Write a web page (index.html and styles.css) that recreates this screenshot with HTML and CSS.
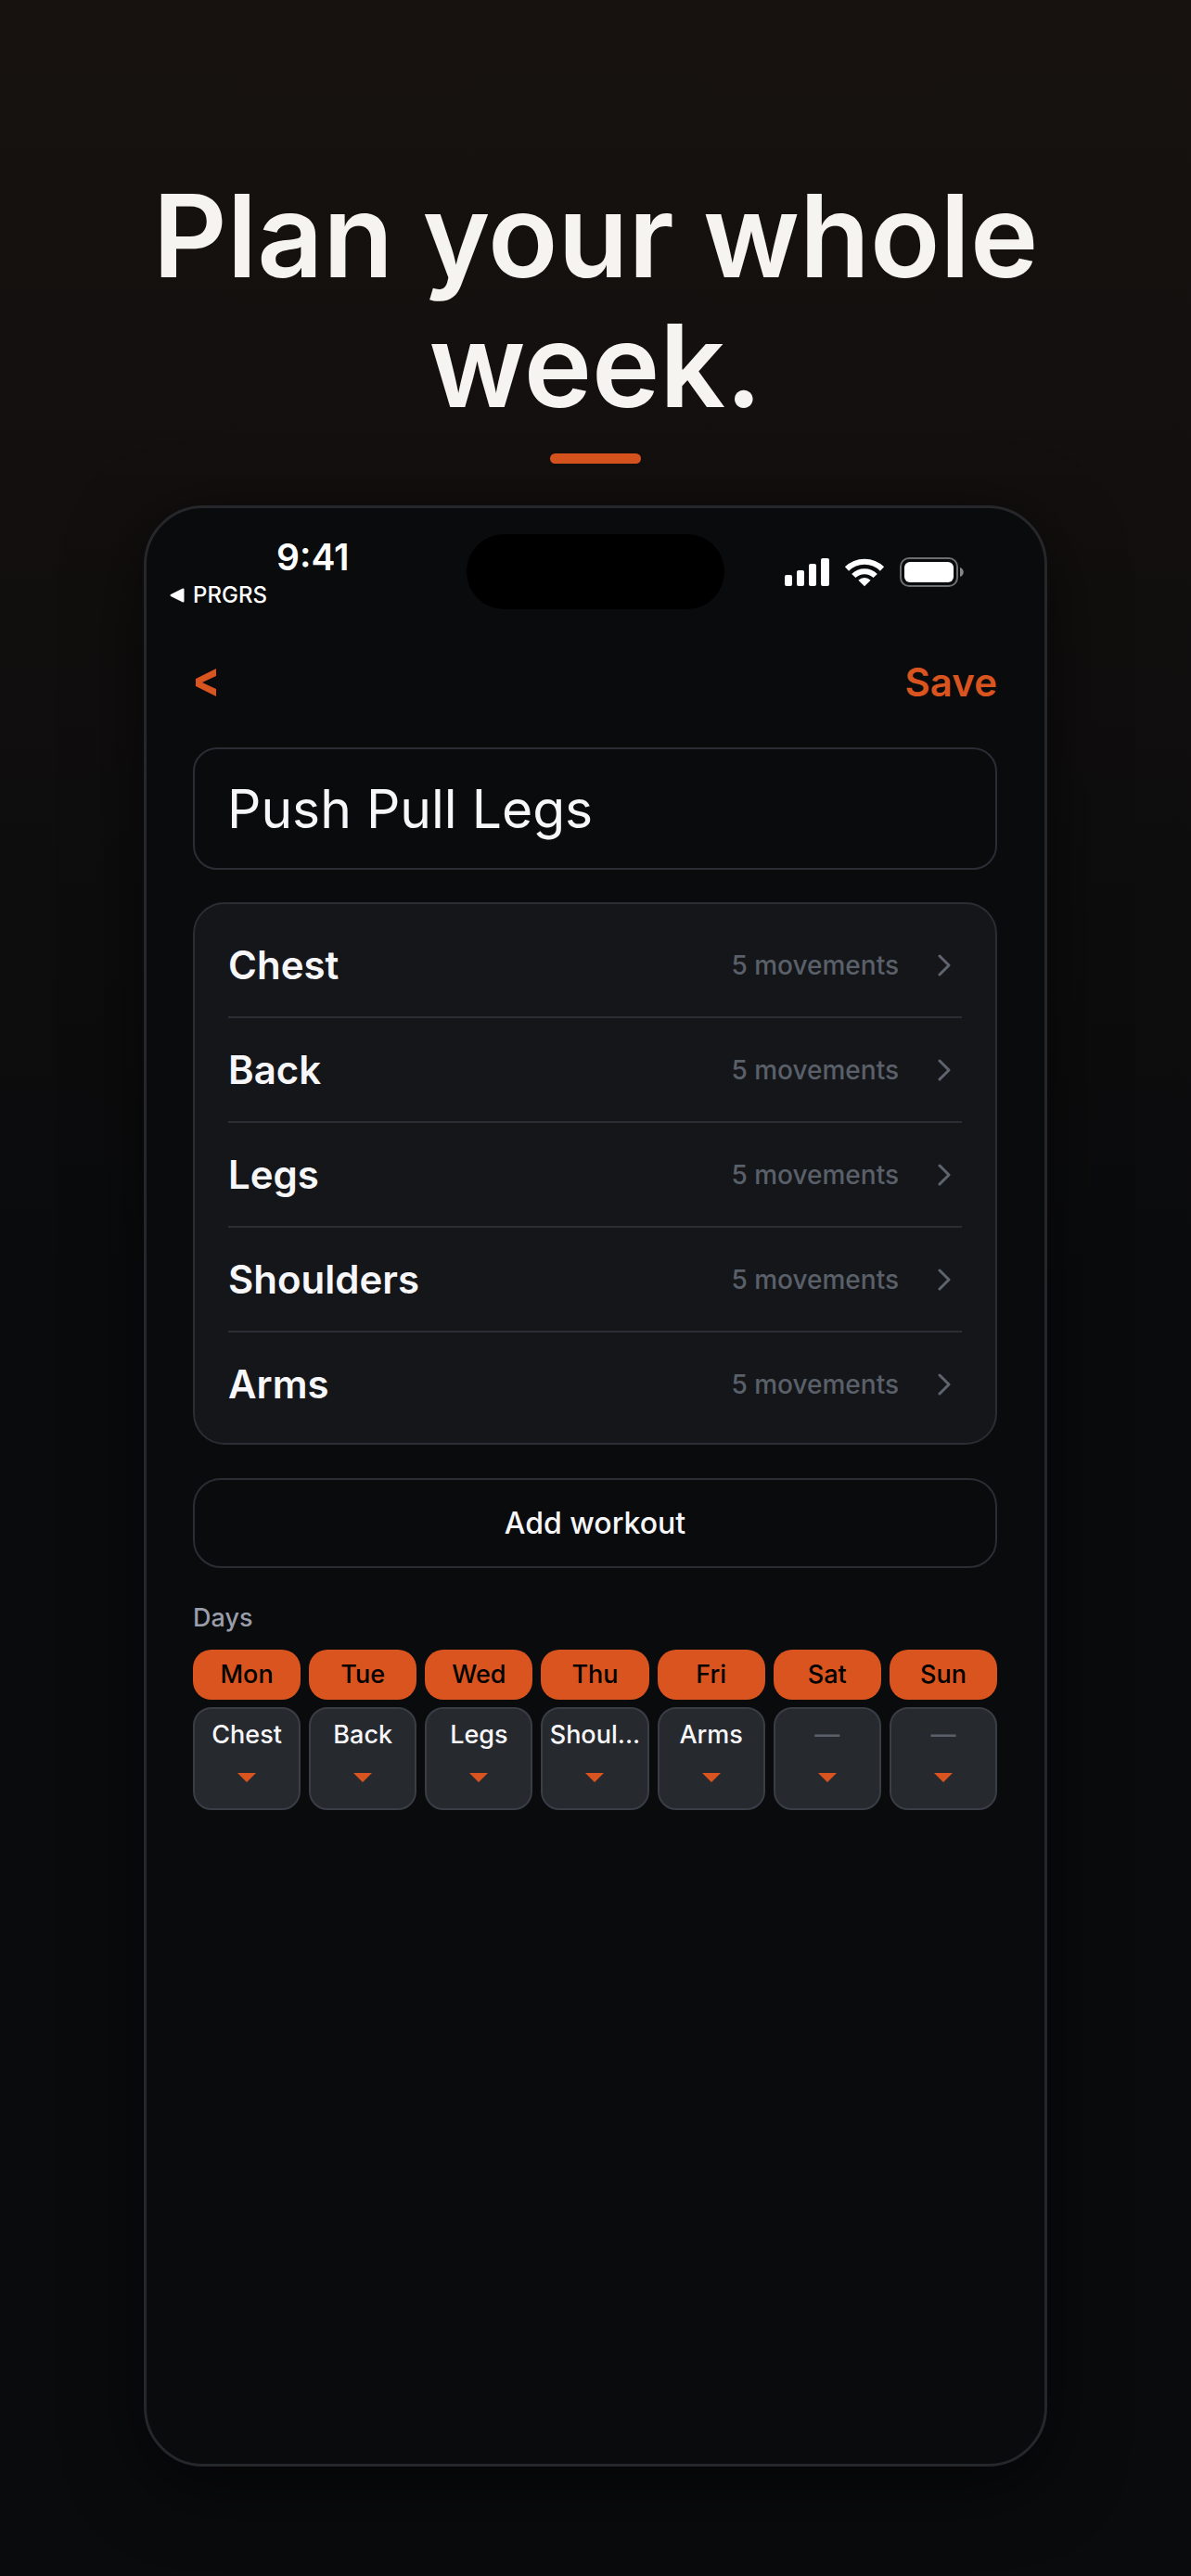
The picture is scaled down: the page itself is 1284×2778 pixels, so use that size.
FILE: index.html
```html
<!DOCTYPE html>
<html lang="en">
<head>
  <meta charset="UTF-8">
  <meta name="viewport" content="width=device-width, initial-scale=1">
  <title>Plan your whole week</title>
  <link rel="stylesheet" href="styles.css">
</head>
<body>
  <h1>Plan your whole week.</h1>
  <div class="accent"></div>

  <main class="phone">
    <!-- Status bar -->
    <div class="status">
      <div class="status-left">
        <span class="time">9:41</span>
        <span class="back-app">
          <svg width="16" height="16" viewBox="0 0 16 16"><path d="M14.500 1.500v13L1.500 8z" fill="#fff" stroke="#fff" stroke-width="2" stroke-linejoin="round"/></svg>
          PRGRS
        </span>
      </div>
      <div class="island"></div>
      <div class="status-right">
        <svg width="48" height="32" viewBox="0 0 48 32" fill="#fff">
          <rect x="0" y="19" width="8" height="12" rx="2"/>
          <rect x="13" y="14" width="8" height="17" rx="2"/>
          <rect x="26" y="7" width="8" height="24" rx="2"/>
          <rect x="39" y="1" width="9" height="30" rx="2"/>
        </svg>
        <svg width="44" height="32" viewBox="0 0 44 32" fill="none" stroke="#fff">
          <path d="M3 12.5a27 27 0 0 1 38 0" stroke-width="6"/>
          <path d="M10.3 20a16.5 16.5 0 0 1 23.4 0" stroke-width="6"/>
          <path d="M22 31.3l-6.6-6.6a9.4 9.4 0 0 1 13.2 0z" fill="#fff" stroke="none"/>
        </svg>
        <svg width="70" height="32" viewBox="0 0 70 32">
          <rect x="1" y="1" width="61" height="30" rx="9" fill="none" stroke="#6c6d6e" stroke-width="2"/>
          <rect x="5" y="5" width="53" height="22" rx="6" fill="#fff"/>
          <path d="M65 11c5 1.500 5 8.500 0 10z" fill="#858687"/>
        </svg>
      </div>
    </div>

    <form class="screen">
      <div class="toolbar">
        <button type="button" class="back" aria-label="Back">
          <svg width="24" height="32" viewBox="0 0 24 32"><path d="M23 1v8L8 16l15 7v8L1 20v-8z" fill="#d9541e"/></svg>
        </button>
        <button type="submit" class="save">Save</button>
      </div>

      <input class="plan-name" type="text" value="Push Pull Legs" aria-label="Plan name">

      <!-- Workouts -->
      <ul class="workouts">
        <li><a href="#chest"><span class="name">Chest</span><span class="count">5 movements</span><svg class="chevron" viewBox="0 0 14 24"><path d="M2 2l10 10L2 22"/></svg></a></li>
        <li><a href="#back"><span class="name">Back</span><span class="count">5 movements</span><svg class="chevron" viewBox="0 0 14 24"><path d="M2 2l10 10L2 22"/></svg></a></li>
        <li><a href="#legs"><span class="name">Legs</span><span class="count">5 movements</span><svg class="chevron" viewBox="0 0 14 24"><path d="M2 2l10 10L2 22"/></svg></a></li>
        <li><a href="#shoulders"><span class="name">Shoulders</span><span class="count">5 movements</span><svg class="chevron" viewBox="0 0 14 24"><path d="M2 2l10 10L2 22"/></svg></a></li>
        <li><a href="#arms"><span class="name">Arms</span><span class="count">5 movements</span><svg class="chevron" viewBox="0 0 14 24"><path d="M2 2l10 10L2 22"/></svg></a></li>
      </ul>

      <button type="button" class="add">Add workout</button>

      <!-- Days -->
      <h2>Days</h2>
      <div class="days">
        <div class="day">
          <label for="mon">Mon</label>
          <div class="pick"><select id="mon"><option>Chest</option><option>—</option></select></div>
        </div>
        <div class="day">
          <label for="tue">Tue</label>
          <div class="pick"><select id="tue"><option>Back</option><option>—</option></select></div>
        </div>
        <div class="day">
          <label for="wed">Wed</label>
          <div class="pick"><select id="wed"><option>Legs</option><option>—</option></select></div>
        </div>
        <div class="day">
          <label for="thu">Thu</label>
          <div class="pick"><select id="thu"><option>Shoul...</option><option>—</option></select></div>
        </div>
        <div class="day">
          <label for="fri">Fri</label>
          <div class="pick"><select id="fri"><option>Arms</option><option>—</option></select></div>
        </div>
        <div class="day">
          <label for="sat">Sat</label>
          <div class="pick"><select id="sat" class="rest"><option>—</option></select></div>
        </div>
        <div class="day">
          <label for="sun">Sun</label>
          <div class="pick"><select id="sun" class="rest"><option>—</option></select></div>
        </div>
      </div>
    </form>
  </main>
</body>
</html>
```
FILE: styles.css
```css
* { box-sizing: border-box; }
body {
  margin: 0;
  min-height: 100vh;
  padding: 184px 155px 118px;
  display: flex;
  flex-direction: column;
  background: linear-gradient(180deg, #17120f 0%, #0a0b0d 50%);
  color: #f7f7fa;
  font-family: Inter, "Liberation Sans", sans-serif;
}
h1 {
  margin: 0;
  font-size: 124px;
  line-height: 140px;
  font-weight: 600;
  text-align: center;
  color: #f6f4f1;
}
.accent { width: 98px; height: 11px; margin: 25px auto 45px; border-radius: 6px; background: #d9541e; }

button, input, select { font-family: inherit; color: inherit; background: none; border: 0; padding: 0; margin: 0; }

.phone {
  flex: 1;
  border: 3px solid #26272a;
  border-radius: 64px;
  background: #0a0b0d;
  box-shadow: 0 20px 80px rgba(0, 0, 0, 0.6);
}

/* status bar */
.status { display: grid; grid-template-columns: 1fr 278px 1fr; padding-top: 28px; color: #fff; }
.island { height: 81px; border-radius: 41px; background: #000; }
.status-left { display: flex; flex-direction: column; gap: 2px; padding-left: 25px; }
.time { padding-left: 115px; font-size: 39px; line-height: 50px; font-weight: 600; }
.back-app { display: flex; align-items: center; gap: 9px; font-size: 24px; line-height: 28px; font-weight: 500; }
.status-right { display: flex; align-items: center; gap: 16px; padding-left: 65px; }

.screen { padding: 51px 51px 50px 50px; }
.toolbar { display: flex; justify-content: space-between; align-items: center; margin-bottom: 42px; }
.back { display: flex; padding: 0 2px; }
.save { font-size: 42px; line-height: 56px; font-weight: 600; color: #d9541e; }

.plan-name {
  display: block;
  width: 100%;
  height: 132px;
  padding: 0 35px;
  border: 2px solid #2b2d34;
  border-radius: 26px;
  font-size: 57px;
}

.workouts {
  list-style: none;
  margin: 35px 0 36px;
  padding: 10px 36px 8px;
  border: 2px solid #2b2d34;
  border-radius: 34px;
  background: #15161a;
}
.workouts li + li { border-top: 2px solid #2b2d34; }
.workouts a { display: flex; align-items: center; height: 111px; padding-right: 12px; color: inherit; text-decoration: none; }
.name { flex: 1; font-size: 42px; font-weight: 600; }
.count { font-size: 28px; font-weight: 500; color: #5a6069; }
.chevron { width: 14px; height: 24px; margin-left: 42px; fill: none; stroke: #5f656e; stroke-width: 3; stroke-linecap: round; stroke-linejoin: round; }

.add { display: block; width: 100%; height: 97px; border: 2px solid #2b2d34; border-radius: 30px; font-size: 32px; font-weight: 500; }

/* week */
h2 { margin: 36px 0 16px; font-size: 27px; line-height: 36px; font-weight: 500; color: #9a9eab; }
.days { display: grid; grid-template-columns: repeat(7, 1fr); gap: 9px; }
.day label {
  display: block;
  margin-bottom: 8px;
  border-radius: 20px;
  background: #d9541e;
  color: #000;
  font-size: 27px;
  line-height: 54px;
  font-weight: 500;
  text-align: center;
}
.pick { position: relative; }
.pick select {
  appearance: none;
  display: block;
  width: 100%;
  height: 111px;
  padding-bottom: 52px;
  border: 2px solid #393d46;
  border-radius: 20px;
  background: #26292e;
  font-size: 27px;
  font-weight: 500;
  text-align: center;
  text-align-last: center;
}
.pick select.rest { color: #5a6069; }
.pick::after {
  content: "";
  position: absolute;
  left: 50%;
  bottom: 30px;
  margin-left: -10px;
  border: 10px solid transparent;
  border-top-color: #d9541e;
  border-bottom: 0;
  pointer-events: none;
}
```
